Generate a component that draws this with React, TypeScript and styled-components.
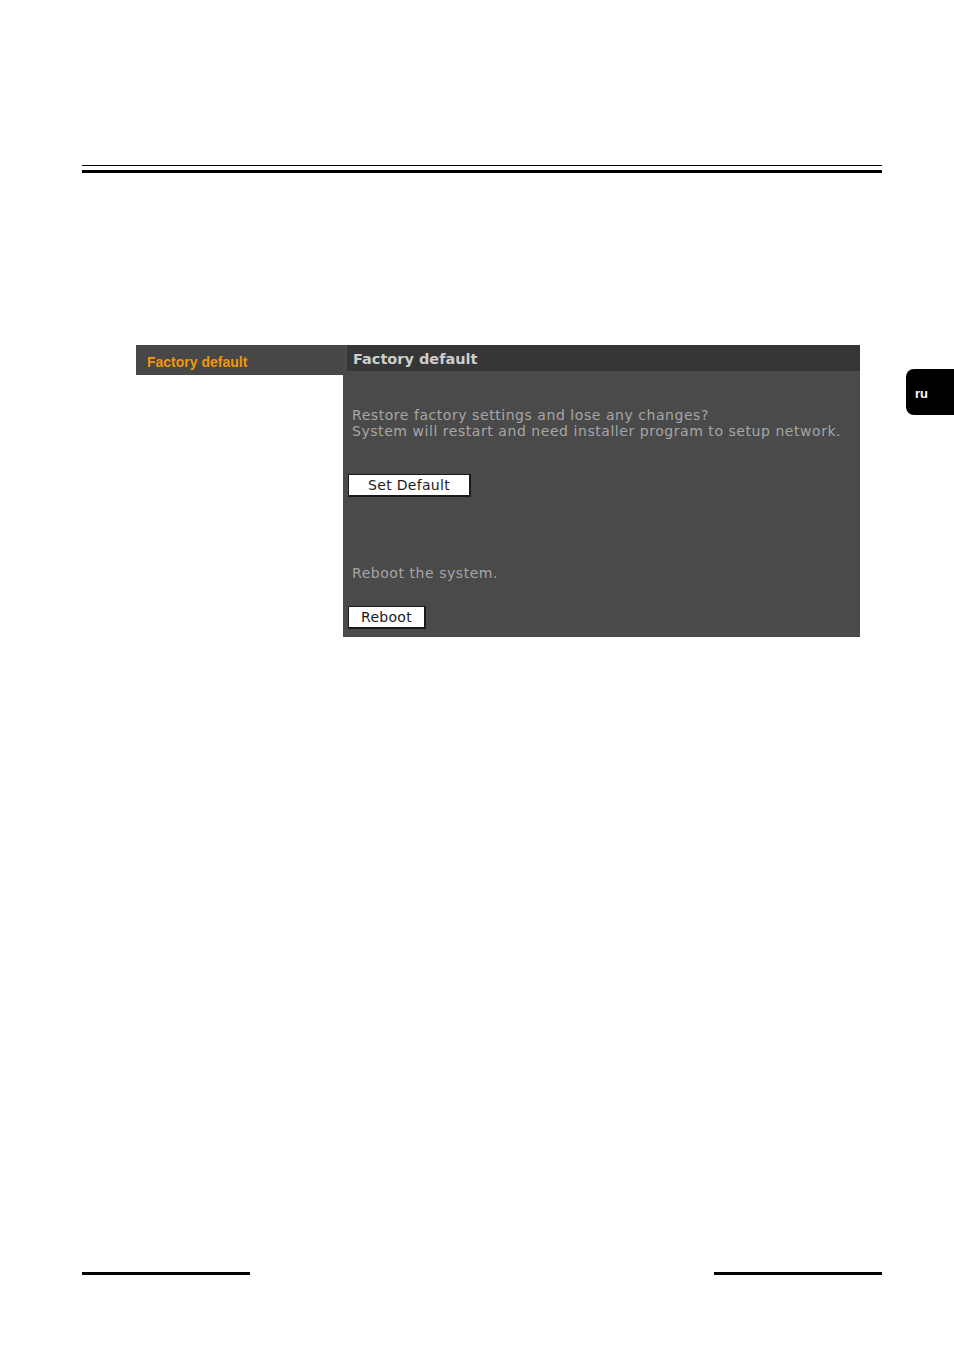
import React from "react";
import styled, { createGlobalStyle } from "styled-components";

const GlobalStyle = createGlobalStyle`
  html, body {
    margin: 0;
    padding: 0;
    background: #fff;
  }
  body {
    font-family: "DejaVu Sans", Verdana, sans-serif;
  }
`;

const Page = styled.div`
  position: relative;
  width: 954px;
  height: 1350px;
  display: flex;
  flex-direction: column;
  box-sizing: border-box;
  padding: 165px 0 0;
  overflow: hidden;
`;

const HeaderRule = styled.div`
  margin: 0 72px 0 82px;
  display: flex;
  flex-direction: column;
  gap: 4px;
`;

const Rule = styled.div<{ $thick?: boolean }>`
  height: ${(p) => (p.$thick ? "3px" : "1px")};
  background: #000;
`;

const Screen = styled.div`
  margin: 172px 0 0 136px;
  display: flex;
  align-items: flex-start;
`;

const Menu = styled.div`
  width: 207px;
  height: 30px;
  background: #474747;
  display: flex;
  align-items: center;
  padding-left: 11px;
  box-sizing: border-box;
`;

const MenuItem = styled.span`
  font-family: "Liberation Sans", Arial, sans-serif;
  font-weight: 700;
  font-size: 14px;
  color: #f0960e;
  padding-top: 3px;
`;

const Panel = styled.div`
  width: 517px;
  height: 292px;
  background: #4a4a4a;
  padding-left: 4px;
  box-sizing: border-box;
  display: flex;
  flex-direction: column;
`;

const PanelTitle = styled.div`
  height: 26px;
  background: #363636;
  display: flex;
  align-items: center;
  padding: 1px 0 0 6px;
  box-sizing: border-box;
  font-weight: 700;
  font-size: 14.5px;
  color: #cdcdcd;
`;

const PanelBody = styled.div`
  display: flex;
  flex-direction: column;
  align-items: flex-start;
`;

const Note = styled.p<{ $top: number }>`
  margin: ${(p) => p.$top}px 0 0 5px;
  font-size: 14px;
  letter-spacing: 0.55px;
  line-height: 16px;
  color: #a6a6a6;
`;

const Button = styled.button<{ $top: number; $width: number }>`
  margin: ${(p) => p.$top}px 0 0 1px;
  width: ${(p) => p.$width}px;
  height: 23px;
  padding: 0;
  background: #fff;
  border: 1px solid #1a1a1a;
  border-right-width: 2px;
  border-bottom-width: 2px;
  font-family: "DejaVu Sans", Verdana, sans-serif;
  font-size: 14px;
  letter-spacing: 0.3px;
  color: #1a1a1a;
  line-height: 19px;
`;

const LangTab = styled.div`
  position: absolute;
  top: 369px;
  right: 0;
  width: 48px;
  height: 46px;
  background: #000;
  border-radius: 8px 0 0 8px;
  display: flex;
  align-items: center;
  padding: 3px 0 0 9px;
  box-sizing: border-box;
  font-family: "Liberation Sans", Arial, sans-serif;
  font-weight: 700;
  font-size: 13px;
  color: #fff;
`;

const Footer = styled.div`
  margin: auto 72px 75px 82px;
  display: flex;
  justify-content: space-between;
`;

const FooterRule = styled.div`
  width: 168px;
  height: 3px;
  background: #000;
`;

export default function App() {
  return (
    <>
      <GlobalStyle />
      <Page>
        <HeaderRule>
          <Rule />
          <Rule $thick />
        </HeaderRule>

        <Screen>
          <Menu>
            <MenuItem>Factory default</MenuItem>
          </Menu>
          <Panel>
            <PanelTitle>Factory default</PanelTitle>
            <PanelBody>
              <Note $top={36}>
                Restore factory settings and lose any changes?
                <br />
                System will restart and need installer program to setup network.
              </Note>
              <Button $top={35} $width={123}>Set Default</Button>
              <Note $top={68}>Reboot the system.</Note>
              <Button $top={25} $width={78}>Reboot</Button>
            </PanelBody>
          </Panel>
        </Screen>

        <LangTab>ru</LangTab>

        <Footer>
          <FooterRule />
          <FooterRule />
        </Footer>
      </Page>
    </>
  );
}
